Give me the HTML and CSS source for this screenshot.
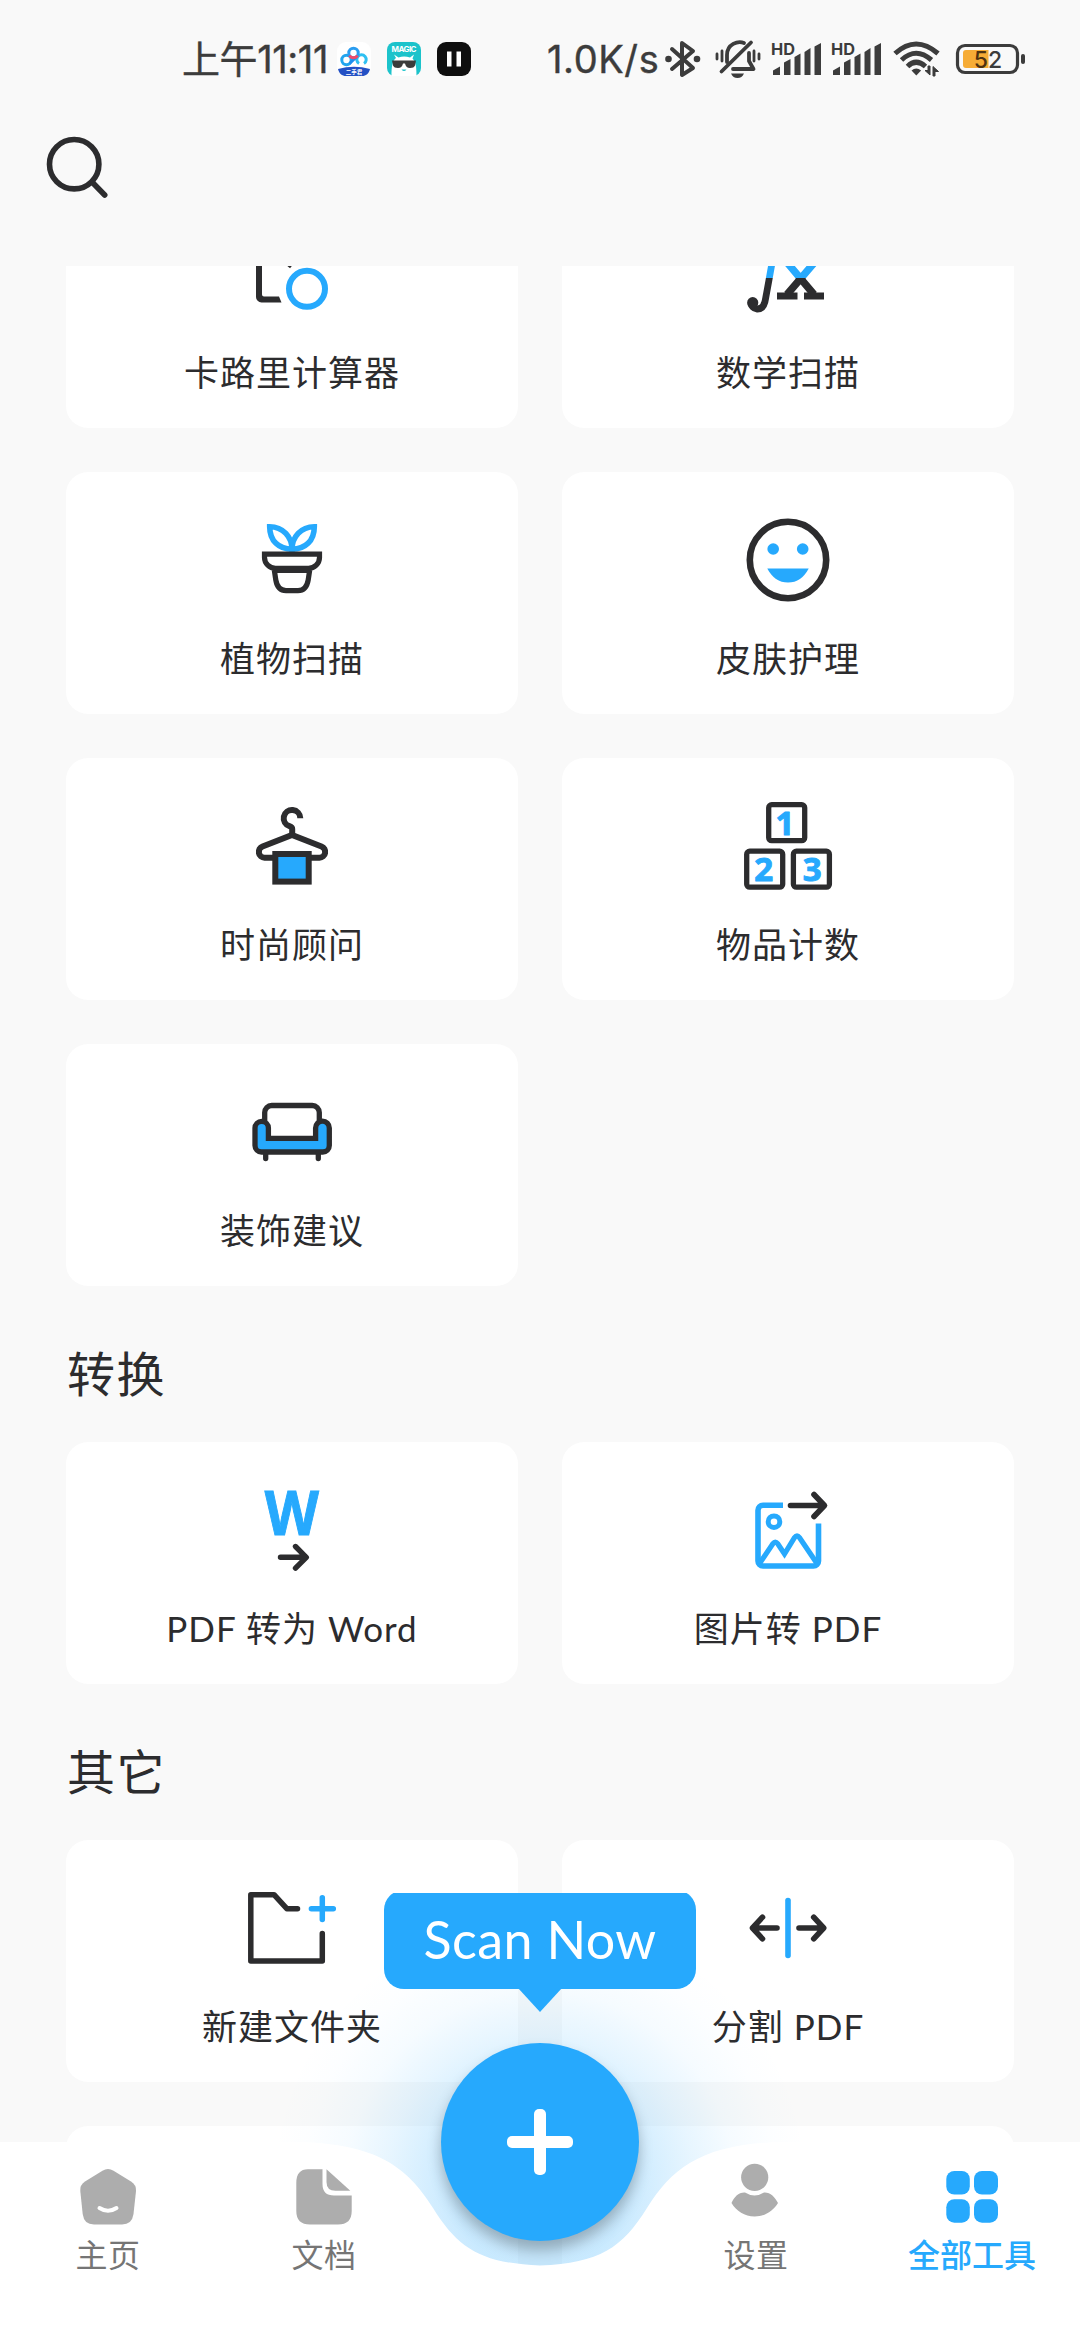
FILE: index.html
```html
<!DOCTYPE html>
<html lang="zh-CN">
<head>
<meta charset="utf-8">
<title>全部工具</title>
<link rel="stylesheet" href="styles.css">
</head>
<body>
<div class="screen">
  <header class="status">
    <span class="clock">上午11:11</span>
    <div class="notices">
      <svg width="34" height="34" viewBox="0 0 34 34">
        <rect width="34" height="34" rx="9" fill="#fff"/>
        <path d="M1 27Q17 22.500 33 27C32 31.500 29 34 25 34H9C5 34 2 31.500 1 27z" fill="#2350c4"/>
        <g fill="none" stroke-width="3">
          <circle cx="9.500" cy="18" r="4.700" stroke="#22a5ee"/>
          <path d="M22 21.500A4.700 4.700 0 1 1 27 21.500" stroke="#2fc0f2"/>
          <path d="M12.500 21.500L20 14.500" stroke="#1e8fee"/>
          <circle cx="16.500" cy="11" r="4.700" stroke="#2a9df0"/>
          <path d="M12.500 13.500a4.700 4.700 0 0 0 8 0" stroke="#f04a6b"/>
        </g>
        <text x="17" y="32" class="tiny" text-anchor="middle">二手君</text>
      </svg>
      <svg width="34" height="34" viewBox="0 0 34 34">
        <rect width="34" height="34" rx="8" fill="#1cc3cb"/>
        <text x="17" y="10" class="magic" text-anchor="middle" textLength="25">MAGIC</text>
        <path d="M4.500 34C4.500 26 5 19 9 16L7 12.500 11.500 15.500Q17 13.500 23 15.500L27 12.500 25.500 16.500C29 20 29.500 26 29.500 34z" fill="#fff"/>
        <path d="M5 18.500h24l-1 5q-1 2.500-5 2.500-4 0-5-4.500h-2q-1 4.500-5 4.500-4 0-5-2.500z" fill="#3b3b3b"/>
        <path d="M14.500 27.500h5q-2.500 3-5 0z" fill="#1cc3cb"/>
      </svg>
      <svg width="34" height="34" viewBox="0 0 34 34">
        <rect width="34" height="34" rx="9" fill="#0f0f0f"/>
        <path d="M10 9.500h4.500v15H10zM19.500 9.500H24v15h-4.500z" fill="#fff"/>
      </svg>
    </div>
    <span class="speed">1.0K/s</span>
    <svg class="ic-bt" width="36" height="40" viewBox="0 0 36 40">
      <path d="M7 10L28 29 17 36V4L28 12 7 30" fill="none" stroke="#3c3c3c" stroke-width="4" stroke-linejoin="round" stroke-linecap="round"/>
      <circle cx="3.500" cy="20" r="3.300" fill="#3c3c3c"/><circle cx="32" cy="20" r="3.300" fill="#3c3c3c"/>
    </svg>
    <svg class="ic-bell" width="46" height="40" viewBox="0 0 46 40">
      <g fill="none" stroke="#3c3c3c" stroke-width="3.800" stroke-linecap="round" stroke-linejoin="round">
        <path d="M12 23V16C12 5 23 1.500 29 4"/>
        <path d="M34 14V22L38.500 30H18"/>
        <path d="M36 3.500L6.500 32.500"/>
        <path d="M2 15v5M7 12v10M39 12v10M44 15v5" stroke-width="2.800"/>
      </g>
      <path d="M16 34.500h13q-2 4.500-6.500 4.500t-6.500-4.500z" fill="#3c3c3c"/>
    </svg>
    <svg class="ic-sim" width="52" height="34" viewBox="0 0 52 34">
      <text x="0" y="13" class="hd" textLength="24" lengthAdjust="spacingAndGlyphs">HD</text>
      <g fill="#3c3c3c"><path d="M2 33v-4.500l7-4V33zM13 33V20.500l6.500-3.500V33zM23.500 33V15l6-3.500V33zM33.500 33V10l6-4V33zM43.500 33V4.500L50 1V33z"/></g>
    </svg>
    <svg class="ic-sim" width="52" height="34" viewBox="0 0 52 34">
      <text x="0" y="13" class="hd" textLength="24" lengthAdjust="spacingAndGlyphs">HD</text>
      <g fill="#3c3c3c"><path d="M2 33v-4.500l7-4V33zM13 33V20.500l6.500-3.500V33zM23.500 33V15l6-3.500V33zM33.500 33V10l6-4V33zM43.500 33V4.500L50 1V33z"/></g>
    </svg>
    <svg class="ic-wifi" width="48" height="36" viewBox="0 0 48 36">
      <g fill="none" stroke="#3c3c3c" stroke-width="5">
        <path d="M2 12.500Q23 -6.500 45 12.500"/><path d="M8.500 19Q23 5.500 38.500 19"/><path d="M14.500 25.500Q23 17 32.500 25.500"/>
      </g>
      <path d="M18.500 29.500q4.800-4 9.600 0L23.300 34.500z" fill="#3c3c3c"/>
      <path d="M37 25v9l-5-4.500h3V25zM40 35v-9.500l5.500 5H42V35z" fill="#3c3c3c" stroke="#3c3c3c"/>
    </svg>
    <svg class="ic-batt" width="70" height="32" viewBox="0 0 70 32">
      <rect x="1.500" y="2.500" width="60" height="27" rx="7.500" fill="none" stroke="#3c3c3c" stroke-width="3.200"/>
      <path d="M10 7H32.500V25H10a3 3 0 0 1-3-3V10a3 3 0 0 1 3-3z" fill="#f6ac36"/>
      <rect x="65" y="11" width="4" height="10" rx="2" fill="#3c3c3c"/>
      <text x="32" y="24.500" class="level" text-anchor="middle"><tspan fill="#4e3210">5</tspan><tspan>2</tspan></text>
    </svg>
  </header>

  <div class="toolbar">
    <svg width="66" height="66" viewBox="0 0 66 66" fill="none" stroke="#2c2c2e" stroke-width="5.600" stroke-linecap="round">
      <circle cx="31.200" cy="31.200" r="24.700"/><path d="M50 50l11.700 12"/>
    </svg>
  </div>

  <main class="content">
    <section class="grid first">
      <div class="card">
        <svg class="icon" viewBox="0 0 90 90" fill="none" stroke-width="6">
          <path d="M34.500 73.400H14.500a5.500 5.500 0 0 1-5.500-5.500V12h6V65.500a2 2 0 0 0 2 2H32z" fill="#2c2c2e"/>
          <path d="M44 38l-2.500-2" stroke="#2c2c2e" stroke-width="3"/>
          <circle cx="60" cy="59.800" r="18" stroke="#26a9fd"/>
        </svg>
        <p>卡路里计算器</p>
      </div>
      <div class="card">
        <svg class="icon" viewBox="0 0 90 90" fill="none" stroke="url(#split)">
          <defs><linearGradient id="split" gradientUnits="userSpaceOnUse" x1="0" y1="0" x2="0" y2="90">
            <stop offset=".548" stop-color="#26a9fd"/><stop offset=".548" stop-color="#2c2c2e"/>
          </linearGradient></defs>
          <path d="M29 34L25.800 52 22.700 69C21.500 78 18 80.200 14 80 10.500 79.800 8 77 8.500 74" stroke-width="6.800"/>
          <circle cx="9.700" cy="73.700" r="5.600" fill="#2c2c2e" stroke="none"/>
          <path d="M44.500 34L71 65.500M71 34L44 65.500" stroke-width="7.400"/>
          <path d="M34 67h20.500M61 67h20" stroke="#2c2c2e" stroke-width="6.800"/>
        </svg>
        <p>数学扫描</p>
      </div>
      <div class="card">
        <svg class="icon" viewBox="0 0 90 90" fill="none" stroke="#2c2c2e" stroke-width="5.200">
          <path d="M22.700 11.700C36 11.700 45 22 45 34.300 32 34.300 22.700 26 22.700 11.700zM67.300 11.700C54 11.700 45 22 45 34.300 58 34.300 67.300 26 67.300 11.700z" stroke="#26a9fd" stroke-width="5.600"/>
          <path d="M17.500 39.200h55v3.300c0 6-5 10.800-11 10.800h-33c-6 0-11-4.800-11-10.800z"/>
          <path d="M26.500 55.500H63.500" stroke-width="5"/>
          <path d="M27.300 55l1.500 10C30 72 33 75.600 39 75.600h12c6 0 9-3.600 10.200-10.600l1.500-10"/>
        </svg>
        <p>植物扫描</p>
      </div>
      <div class="card">
        <svg class="icon" viewBox="0 0 90 90">
          <circle cx="45" cy="45" r="38.200" fill="none" stroke="#2c2c2e" stroke-width="6.600"/>
          <g fill="#26a9fd"><circle cx="30.200" cy="34" r="5.800"/><circle cx="59.700" cy="34" r="5.800"/>
          <path d="M24.300 53.400h41.400C61 62.500 54 67.500 45 67.500S29 62.500 24.300 53.400z"/></g>
        </svg>
        <p>皮肤护理</p>
      </div>
      <div class="card">
        <svg class="icon" viewBox="0 0 90 90" fill="none" stroke="#2c2c2e" stroke-width="6">
          <path d="M53.300 17.200A8.300 8.300 0 1 0 42.500 25.200Q45.200 26 45.200 28V34"/>
          <path d="M28 56.700H17.500a5.800 5.800 0 0 1-2-11.200L45 34 74.500 45.500a5.800 5.800 0 0 1-2 11.200H62"/>
          <rect x="28.300" y="53" width="33.400" height="27.600" fill="#26a9fd"/>
        </svg>
        <p>时尚顾问</p>
      </div>
      <div class="card">
        <svg class="icon" viewBox="0 0 90 90">
          <g fill="none" stroke="#2c2c2e" stroke-width="5.300">
            <rect x="25.700" y="3.700" width="36" height="36" rx="3"/>
            <rect x="3.700" y="50.200" width="36" height="36" rx="3"/>
            <rect x="50.400" y="50.200" width="36" height="36" rx="3"/>
          </g>
          <g class="num"><text x="42" y="33.500">1</text><text x="20.700" y="80">2</text><text x="69.300" y="80">3</text></g>
        </svg>
        <p>物品计数</p>
      </div>
      <div class="card">
        <svg class="icon" viewBox="0 0 90 90" fill="none" stroke="#2c2c2e" stroke-width="5.300">
          <path d="M17.700 34V25.500a7 7 0 0 1 7-7H65.300a7 7 0 0 1 7 7V34"/>
          <path d="M8 41a6.700 6.700 0 0 1 13.400 0V51.300H68.600V41a6.700 6.700 0 0 1 13.700 0V58.500a6.500 6.500 0 0 1-6.500 6.500H14.500a6.500 6.500 0 0 1-6.500-6.500z" fill="#26a9fd"/>
          <path d="M18.700 66v5.500M71.300 66v5.500" stroke-linecap="round"/>
        </svg>
        <p>装饰建议</p>
      </div>
    </section>

    <h2>转换</h2>
    <section class="grid">
      <div class="card">
        <svg class="icon" viewBox="0 0 90 90">
          <text x="17.800" y="50.400" class="w" textLength="54.200" lengthAdjust="spacingAndGlyphs">W</text>
          <path d="M33.500 72.300H59M48.500 61.500L59.300 72.300 48.500 83.200" fill="none" stroke="#2c2c2e" stroke-width="5.400" stroke-linecap="round" stroke-linejoin="round"/>
        </svg>
        <p>PDF 转为 Word</p>
      </div>
      <div class="card">
        <svg class="icon" viewBox="0 0 90 90" fill="none" stroke="#26a9fd" stroke-width="5.600">
          <path d="M40 20.300H20a5 5 0 0 0-5 5V76a5 5 0 0 0 5 5H70.500a5 5 0 0 0 5-5V38.500"/>
          <circle cx="31" cy="36.700" r="5.800" stroke-width="5"/>
          <path d="M16.500 78.500L30 58.500q2.300-3 4.600 0L41.500 69 51.600 52.500q2.400-3.500 4.800 0L74 78.500" stroke-width="5.200"/>
          <path d="M47.500 20.500H81M71 9.500L81.500 20.500 71 31.500" stroke="#2c2c2e" stroke-linecap="round" stroke-linejoin="round"/>
        </svg>
        <p>图片转 PDF</p>
      </div>
    </section>

    <h2>其它</h2>
    <section class="grid">
      <div class="card">
        <svg class="icon" viewBox="0 0 90 90" fill="none" stroke="#2c2c2e" stroke-width="5.500" stroke-linecap="round" stroke-linejoin="round">
          <path d="M50.500 25.700H39.800L27 11.700H3.800V78H75.300V50.500"/>
          <path d="M64.400 25.700H86.300M75.300 14.800V36.600" stroke="#26a9fd"/>
        </svg>
        <p>新建文件夹</p>
      </div>
      <div class="card">
        <svg class="icon" viewBox="0 0 90 90" fill="none" stroke="#2c2c2e" stroke-width="5.600" stroke-linecap="round" stroke-linejoin="round">
          <path d="M45 17.500V72.500" stroke="#26a9fd"/>
          <path d="M34 45H9.700M19.500 34.200L9.500 45 19.500 55.800M56 45H80.500M70.700 34.200L80.700 45 70.700 55.800"/>
        </svg>
        <p>分割 PDF</p>
      </div>
      <div class="card"></div>
      <div class="card"></div>
    </section>
  </main>

  <div class="glow"></div>
  <nav class="tabbar">
    <svg class="tabbar-bg" width="1080" height="198" viewBox="0 0 1080 198">
      <path d="M0 0H300C375 2 407 24 433 66C458 106 480 121 540 123.500C600 121 622 106 647 66C673 24 705 2 780 0H1080V198H0z" fill="#fff"/>
    </svg>
    <div class="tabs">
      <div class="tab">
        <svg width="56" height="56" viewBox="0 0 56 56">
          <path d="M22.500 1.700Q28-1.500 33.500 1.700L51 12.500Q56.500 16 56 22L53.500 45Q52 55.500 42 55.500H14Q4 55.500 2.700 45L.300 22Q-.300 16 5 12.500z" fill="#adadad"/>
          <path d="M19.500 39Q28 44.500 36.500 39" fill="none" stroke="#fff" stroke-width="4" stroke-linecap="round"/>
        </svg>
        <span>主页</span>
      </div>
      <div class="tab">
        <svg width="56" height="56" viewBox="0 0 56 56" fill="#adadad">
          <path d="M12 .300H26.500V15Q26.500 26.500 38 26.500H55.700V42Q55.700 55.500 42 55.500H14Q.300 55.500 .300 42V14Q.300 .300 12 .300z"/>
          <path d="M30.500 .300L54.300 21.800H39.500Q30.500 21.800 30.500 13z"/>
        </svg>
        <span>文档</span>
      </div>
      <div class="tab fab-slot">
        <div class="bubble">Scan Now</div>
        <div class="fab"></div>
      </div>
      <div class="tab">
        <svg width="56" height="56" viewBox="0 0 56 56" fill="#adadad">
          <circle cx="26.700" cy="8.300" r="13.600"/>
          <path d="M17 23.500Q26.500 29.500 36 23.500C42 23 47 28 50 34C45 42 37 47.500 26.700 47.500S8.500 42 3.500 34C6 28 11 23 17 23.500z"/>
        </svg>
        <span>设置</span>
      </div>
      <div class="tab active">
        <svg width="56" height="56" viewBox="0 0 56 56" fill="#26a9fd">
          <rect x="2.300" y="2" width="23.500" height="23.500" rx="8"/><rect x="30" y="2" width="24" height="23.500" rx="8"/>
          <rect x="2.300" y="30.200" width="23.500" height="23.500" rx="8"/><rect x="30" y="30.200" width="24" height="23.500" rx="8"/>
        </svg>
        <span>全部工具</span>
      </div>
    </div>
    <div class="home-bar"></div>
  </nav>
</div>
</body>
</html>
```
FILE: styles.css
```css
* { box-sizing: border-box; }
body { margin: 0; }
svg { display: block; flex: none; overflow: visible; }
.screen {
  position: relative;
  display: flex;
  flex-direction: column;
  width: 1080px;
  height: 2340px;
  overflow: hidden;
  background: #f9f9f9;
  color: #2c2c2e;
  font-family: Lato, "Noto Sans CJK SC", sans-serif;
}

/* status bar */
.status {
  display: flex;
  align-items: center;
  height: 118px;
  padding-left: 182px;
  color: #3c3c3c;
  font: 400 38px/1 Inter, "Noto Sans CJK SC", sans-serif;
  white-space: nowrap;
}
.clock { width: 155px; letter-spacing: -.400px; -webkit-text-stroke: .400px #3c3c3c; }
.notices { display: flex; gap: 16px; width: 210px; }
.speed { width: 118px; letter-spacing: .600px; -webkit-text-stroke: .400px #3c3c3c; }
.ic-bell { margin-left: 14px; }
.ic-sim { margin-left: 8px; }
.ic-bell + .ic-sim { margin-left: 10px; }
.ic-wifi { margin-left: 10px; }
.ic-batt { margin-left: 15px; }
.tiny { font: 700 5.500px "Noto Sans CJK SC", sans-serif; fill: #fff; }
.magic { font: 700 8px Inter, sans-serif; fill: #fff; }
.hd { font: 700 16px Inter, sans-serif; fill: #3c3c3c; }
.level { font: 500 23px Inter, sans-serif; fill: #3c3c3c; }

.toolbar { height: 148px; padding: 15px 0 0 43px; }

/* tool cards */
.content { flex: 1; min-height: 0; overflow: hidden; }
.grid {
  display: grid;
  grid-template-columns: 452px 452px;
  grid-auto-rows: 242px;
  gap: 44px;
  padding: 0 66px;
}
.grid.first { margin-top: -80px; }
.card {
  display: flex;
  flex-direction: column;
  align-items: center;
  padding-top: 43px;
  border-radius: 22px;
  background: #fff;
}
.icon { width: 90px; height: 90px; }
.card p {
  margin: 28px 0 0;
  font-size: 35px;
  line-height: 50px;
  letter-spacing: 1px;
  white-space: nowrap;
}
h2 {
  height: 156px;
  margin: 0;
  padding: 53px 0 0 67px;
  font-size: 48px;
  line-height: 70px;
  font-weight: 400;
  letter-spacing: 1.500px;
}
.w {
  font: 700 61.500px "Noto Sans", sans-serif;
  fill: #26a9fd;
  stroke: #26a9fd;
  stroke-width: 1;
}
.num {
  font: 700 33px "Open Sans", sans-serif;
  text-anchor: middle;
  fill: #26a9fd;
  stroke: #26a9fd;
  stroke-width: 1;
  stroke-linejoin: round;
}

/* bottom bar, floats over the list */
.glow {
  position: absolute;
  left: 270px;
  bottom: -115px;
  width: 540px;
  height: 540px;
  border-radius: 50%;
  background: radial-gradient(circle closest-side, rgba(38,169,253,.25) 32%, rgba(38,169,253,.19) 43%, rgba(38,169,253,.11) 57%, rgba(38,169,253,.045) 72%, rgba(38,169,253,.012) 87%, rgba(38,169,253,0) 100%);
}
.tabbar {
  position: absolute;
  left: 0;
  bottom: 0;
  width: 1080px;
  height: 198px;
}
.tabbar-bg { position: absolute; left: 0; top: 0; }
.tabs { position: relative; display: flex; height: 168px; }
.tab {
  display: flex;
  flex-direction: column;
  align-items: center;
  width: 216px;
  padding-top: 27px;
  color: #757575;
  font-size: 32px;
  letter-spacing: .500px;
}
.tab span { line-height: 40px; margin-top: 10px; }
.tab.active { color: #26a9fd; font-weight: 500; letter-spacing: 0; }
.fab-slot { position: relative; padding: 0; }
.fab {
  position: absolute;
  left: 9px;
  top: -99px;
  width: 198px;
  height: 198px;
  border-radius: 50%;
  background: #26a9fd;
  box-shadow: 0 9px 14px rgba(0,0,0,.26);
}
.fab::before, .fab::after {
  content: "";
  position: absolute;
  left: 66px;
  top: 93px;
  width: 66px;
  height: 12px;
  border-radius: 5px;
  background: #fff;
}
.fab::after { transform: rotate(90deg); }
.bubble {
  position: absolute;
  left: -48px;
  top: -252px;
  width: 312px;
  height: 124px;
  color: #fff;
  font-size: 52px;
  line-height: 99px;
  text-align: center;
  letter-spacing: .400px;
  white-space: nowrap;
  clip-path: polygon(0 3px, 100% 3px, 100% 100%, 0 100%);
}
.bubble::before {
  content: "";
  position: absolute;
  z-index: -1;
  left: 0;
  top: 0;
  width: 312px;
  height: 99px;
  border-radius: 20px;
  background: #26a9fd;
}
.bubble::after {
  content: "";
  position: absolute;
  left: 134px;
  top: 98px;
  border: 22px solid transparent;
  border-bottom: 0;
  border-top: 24px solid #26a9fd;
}
.home-bar { width: 400px; height: 10px; margin: 0 auto; border-radius: 5px; background: #333; }
```
